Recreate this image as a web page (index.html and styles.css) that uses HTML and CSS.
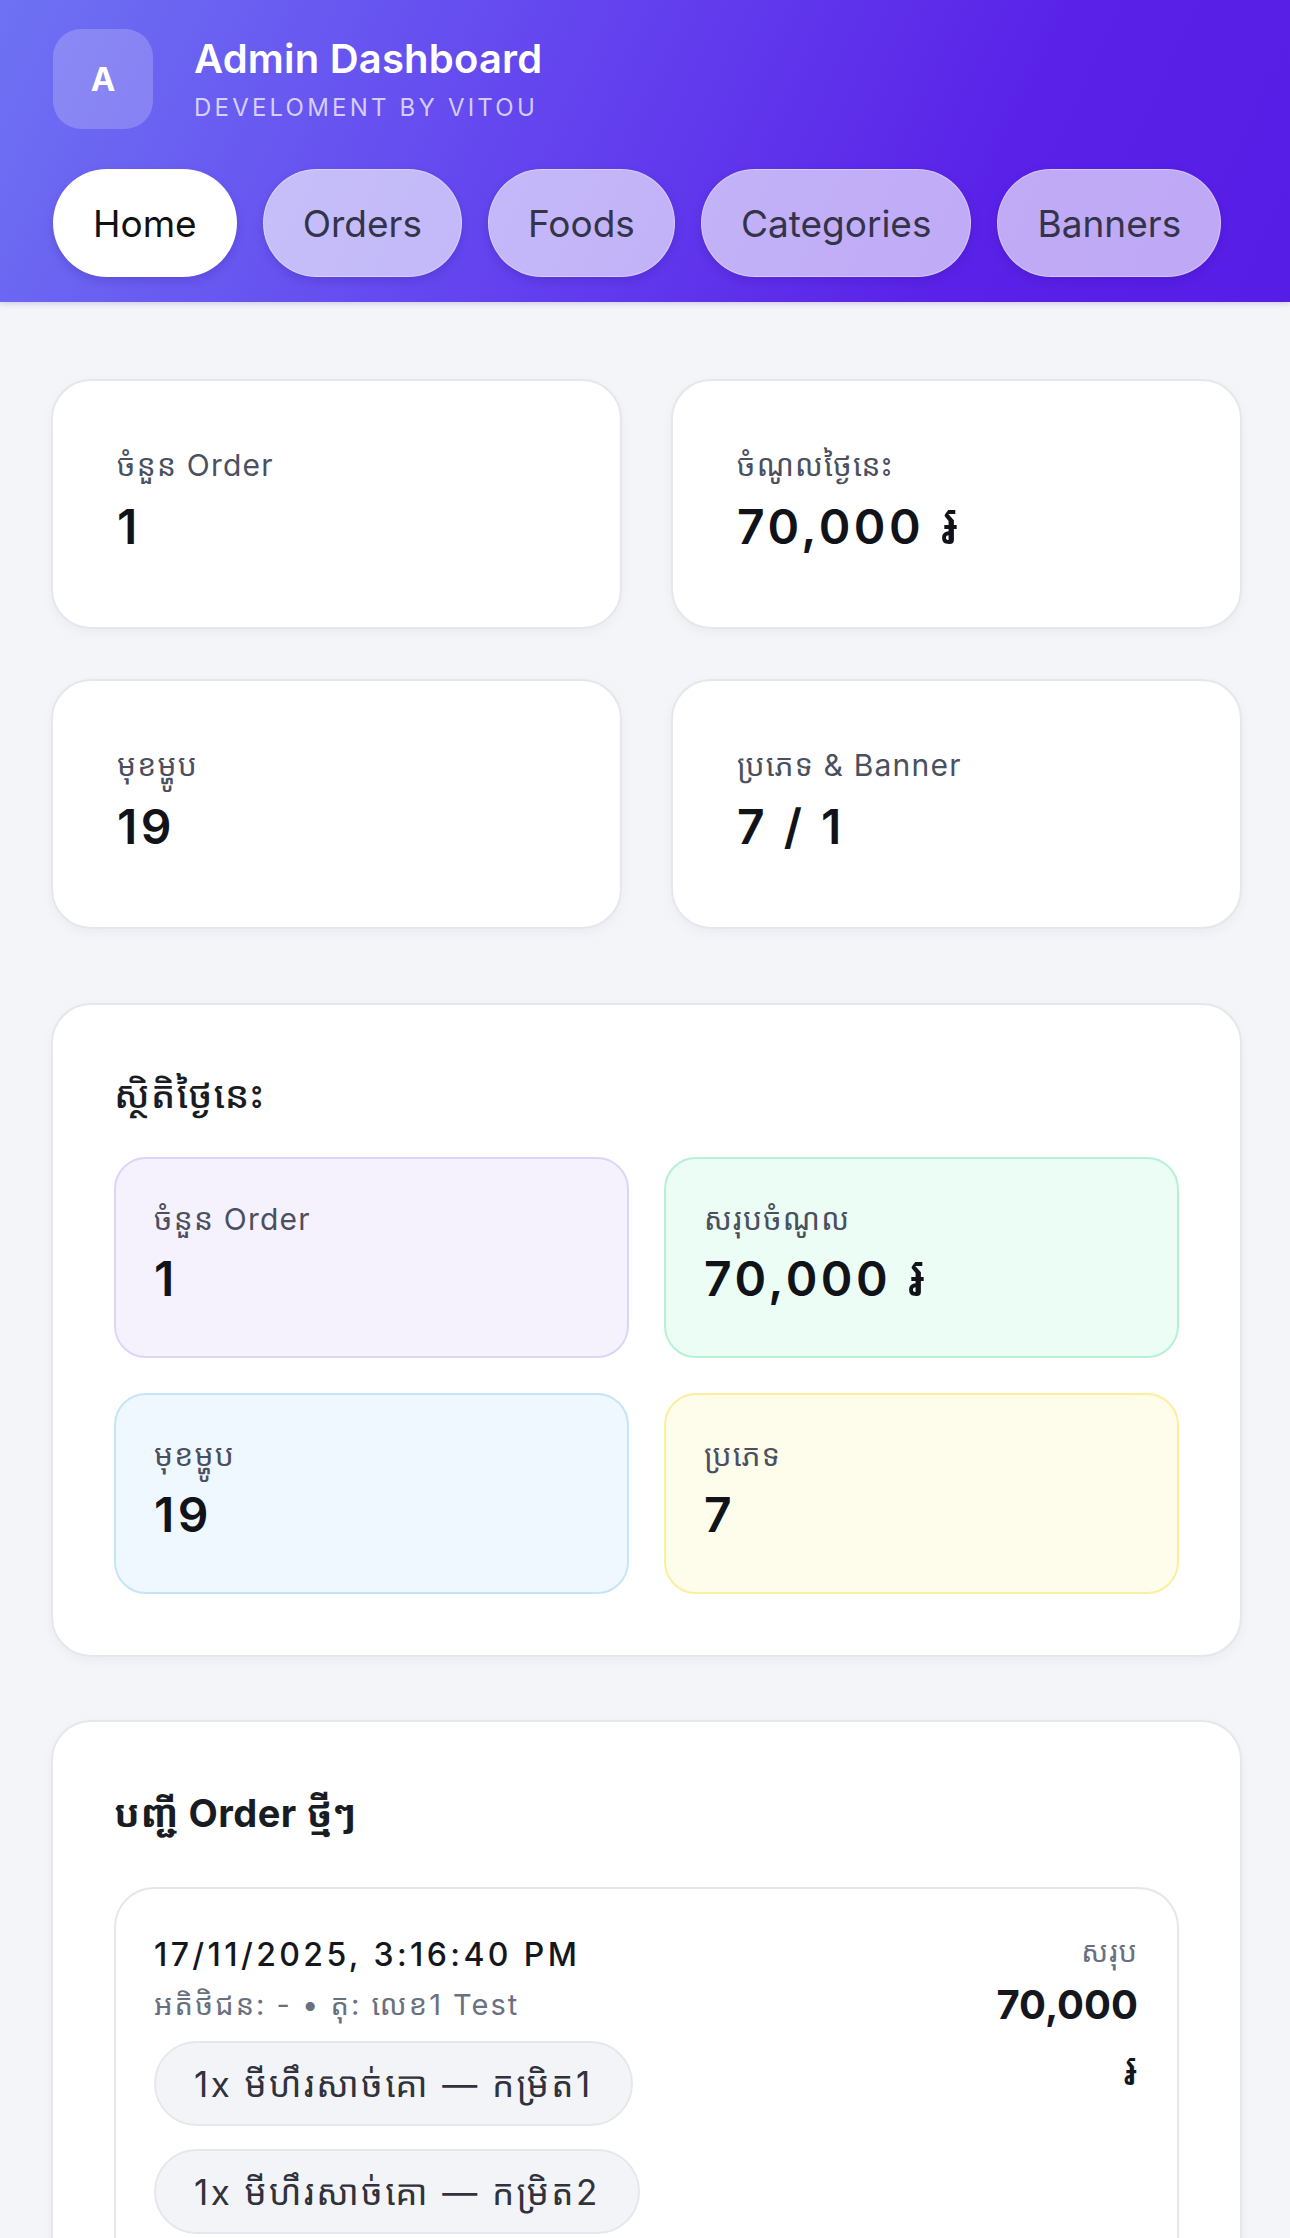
FILE: index.html
```html
<!DOCTYPE html>
<html lang="km">
<head>
<meta charset="utf-8">
<title>Admin Dashboard</title>
<link rel="stylesheet" href="styles.css">
</head>
<body>
<header class="topbar">
  <div class="brand">
    <div class="avatar">A</div>
    <div class="brand-text">
      <div class="brand-title">Admin Dashboard</div>
      <div class="brand-sub">DEVELOMENT BY VITOU</div>
    </div>
  </div>
  <nav class="tabs">
    <a class="tab active">Home</a>
    <a class="tab">Orders</a>
    <a class="tab">Foods</a>
    <a class="tab">Categories</a>
    <a class="tab">Banners</a>
  </nav>
</header>

<main class="content">
  <section class="stats-grid">
    <div class="stat-card">
      <div class="stat-label">ចំនួន Order</div>
      <div class="stat-value">1</div>
    </div>
    <div class="stat-card">
      <div class="stat-label">ចំណូលថ្ងៃនេះ</div>
      <div class="stat-value">70,000 <span class="riel">៛</span></div>
    </div>
    <div class="stat-card">
      <div class="stat-label">មុខម្ហូប</div>
      <div class="stat-value">19</div>
    </div>
    <div class="stat-card">
      <div class="stat-label">ប្រភេទ &amp; Banner</div>
      <div class="stat-value">7 / 1</div>
    </div>
  </section>

  <section class="panel today">
    <h2 class="panel-title">ស្ថិតិថ្ងៃនេះ</h2>
    <div class="mini-grid">
      <div class="mini-card purple">
        <div class="stat-label">ចំនួន Order</div>
        <div class="stat-value">1</div>
      </div>
      <div class="mini-card green">
        <div class="stat-label">សរុបចំណូល</div>
        <div class="stat-value">70,000 <span class="riel">៛</span></div>
      </div>
      <div class="mini-card blue">
        <div class="stat-label">មុខម្ហូប</div>
        <div class="stat-value">19</div>
      </div>
      <div class="mini-card yellow">
        <div class="stat-label">ប្រភេទ</div>
        <div class="stat-value">7</div>
      </div>
    </div>
  </section>

  <section class="panel orders">
    <h2 class="panel-title orders-title">បញ្ជី Order ថ្មីៗ</h2>
    <div class="order-card">
      <div class="order-main">
        <div class="order-date">17/11/2025, 3:16:40 PM</div>
        <div class="order-meta">អតិថិជន: - • តុ: លេខ1 Test</div>
        <div class="order-items">
          <span class="item-pill">1x មីហឹរសាច់គោ — កម្រិត1</span>
          <span class="item-pill">1x មីហឹរសាច់គោ — កម្រិត2</span>
        </div>
      </div>
      <div class="order-total">
        <div class="total-label">សរុប</div>
        <div class="total-value">70,000 <span class="riel">៛</span></div>
      </div>
    </div>
  </section>
</main>
</body>
</html>
```

FILE: styles.css
```css
* { box-sizing: border-box; }

html, body {
  margin: 0;
  padding: 0;
}

body {
  background: #f4f5f9;
  font-family: Inter, "Noto Sans", "Noto Sans Khmer", "Khmer OS", "DejaVu Sans", sans-serif;
  color: #111827;
}

/* ---------- header ---------- */
.topbar {
  background: linear-gradient(115deg, #6e72f3 0%, #6446ef 40%, #5a22e8 75%, #561de6 100%);
  padding: 29px 53px 25px;
  box-shadow: 0 2px 6px rgba(60, 30, 160, 0.18);
}

.brand {
  display: flex;
  align-items: center;
  gap: 41px;
}

.avatar {
  width: 100px;
  height: 100px;
  border-radius: 28px;
  background: rgba(255, 255, 255, 0.2);
  color: #fff;
  font-size: 33px;
  font-weight: 700;
  display: flex;
  align-items: center;
  justify-content: center;
}

.brand-text {
  display: flex;
  flex-direction: column;
  gap: 11px;
}

.brand-title {
  color: #fff;
  font-size: 40px;
  line-height: 46px;
  font-weight: 600;
  letter-spacing: 0.2px;
}

.brand-sub {
  color: rgba(255, 255, 255, 0.72);
  font-size: 24px;
  line-height: 30px;
  letter-spacing: 3.2px;
}

.tabs {
  display: flex;
  gap: 26px;
  margin-top: 40px;
}

.tab {
  display: flex;
  align-items: center;
  height: 108px;
  padding: 0 39px;
  border-radius: 54px;
  font-size: 37px;
  color: #33344a;
  background: rgba(255, 255, 255, 0.62);
  border: 1.5px solid rgba(255, 255, 255, 0.35);
  box-shadow: 0 4px 10px rgba(40, 10, 120, 0.18);
  text-decoration: none;
}

.tab.active {
  background: #fff;
  color: #111;
}

/* ---------- content ---------- */
.content {
  padding: 77px 48px 0 51px;
}

.stats-grid {
  display: grid;
  grid-template-columns: 1fr 1fr;
  column-gap: 49px;
  row-gap: 50px;
}

.stat-card {
  background: #fff;
  border: 2px solid #e6e7ed;
  border-radius: 40px;
  padding: 64px 64px 0;
  height: 250px;
  box-shadow: 0 4px 12px rgba(20, 20, 60, 0.04);
}

.stat-label {
  font-size: 30px;
  line-height: 40px;
  height: 40px;
  letter-spacing: 1.2px;
  color: #4b5060;
  white-space: nowrap;
}

.stat-value {
  font-size: 48px;
  line-height: 64px;
  height: 64px;
  font-weight: 600;
  letter-spacing: 3.5px;
  color: #111318;
  margin-top: 10px;
  white-space: nowrap;
}

.riel {
  font-size: 58px;
  line-height: 0;
  font-weight: 400;
  letter-spacing: 0;
}

.panel {
  background: #fff;
  border: 2px solid #e6e7ed;
  border-radius: 40px;
  padding: 61px;
  box-shadow: 0 4px 12px rgba(20, 20, 60, 0.04);
}

.today {
  margin-top: 74px;
}

.panel-title {
  margin: 0 0 35px;
  font-size: 38px;
  line-height: 56px;
  height: 56px;
  font-weight: 500;
  letter-spacing: 1px;
  color: #1a1c24;
}

.mini-grid {
  display: grid;
  grid-template-columns: 1fr 1fr;
  grid-auto-rows: 201px;
  gap: 35px;
}

.mini-card {
  border-radius: 32px;
  border: 2.5px solid;
  padding: 40px 38px 0;
  height: 201px;
}

.mini-card .stat-value { margin-top: 8px; }

.mini-card.purple { background: #f5f2fe; border-color: #ddd4fb; }
.mini-card.green  { background: #ecfdf5; border-color: #b6f1d6; }
.mini-card.blue   { background: #f0f8ff; border-color: #c4e5f8; }
.mini-card.yellow { background: #fefdec; border-color: #fbeea0; }

.orders {
  margin-top: 63px;
  padding-top: 63px;
  padding-bottom: 0;
  border-bottom: none;
  border-bottom-left-radius: 0;
  border-bottom-right-radius: 0;
}

.orders-title {
  font-weight: 700;
  letter-spacing: 0.5px;
  margin-bottom: 46px;
}

.order-card {
  display: flex;
  justify-content: space-between;
  gap: 30px;
  border: 2px solid #e6e7ed;
  border-bottom: none;
  border-radius: 40px 40px 0 0;
  padding: 43px 39px 20px 38px;
  background: #fff;
}

.order-main {
  display: flex;
  flex-direction: column;
}

.order-date {
  font-size: 32px;
  line-height: 46px;
  height: 46px;
  font-weight: 500;
  letter-spacing: 3.4px;
  color: #15171d;
  white-space: nowrap;
}

.order-meta {
  font-size: 29px;
  line-height: 40px;
  height: 40px;
  letter-spacing: 2px;
  color: #6b7080;
  margin-top: 7px;
  white-space: nowrap;
}

.order-items {
  display: flex;
  flex-direction: column;
  align-items: flex-start;
  gap: 23px;
  margin-top: 16px;
}

.item-pill {
  display: flex;
  align-items: center;
  height: 85px;
  padding: 0 38px;
  border-radius: 43px;
  background: #f3f4f7;
  border: 2px solid #e6e7ec;
  font-size: 35px;
  letter-spacing: 2.4px;
  color: #30323c;
  white-space: nowrap;
}

.order-total {
  width: min-content;
  text-align: right;
}

.total-label {
  font-size: 29px;
  line-height: 40px;
  letter-spacing: 1px;
  color: #6b7080;
}

.total-value {
  font-size: 40px;
  line-height: 66px;
  font-weight: 700;
  color: #15171d;
}

.total-value .riel {
  font-size: 46px;
  font-weight: 400;
}
```
